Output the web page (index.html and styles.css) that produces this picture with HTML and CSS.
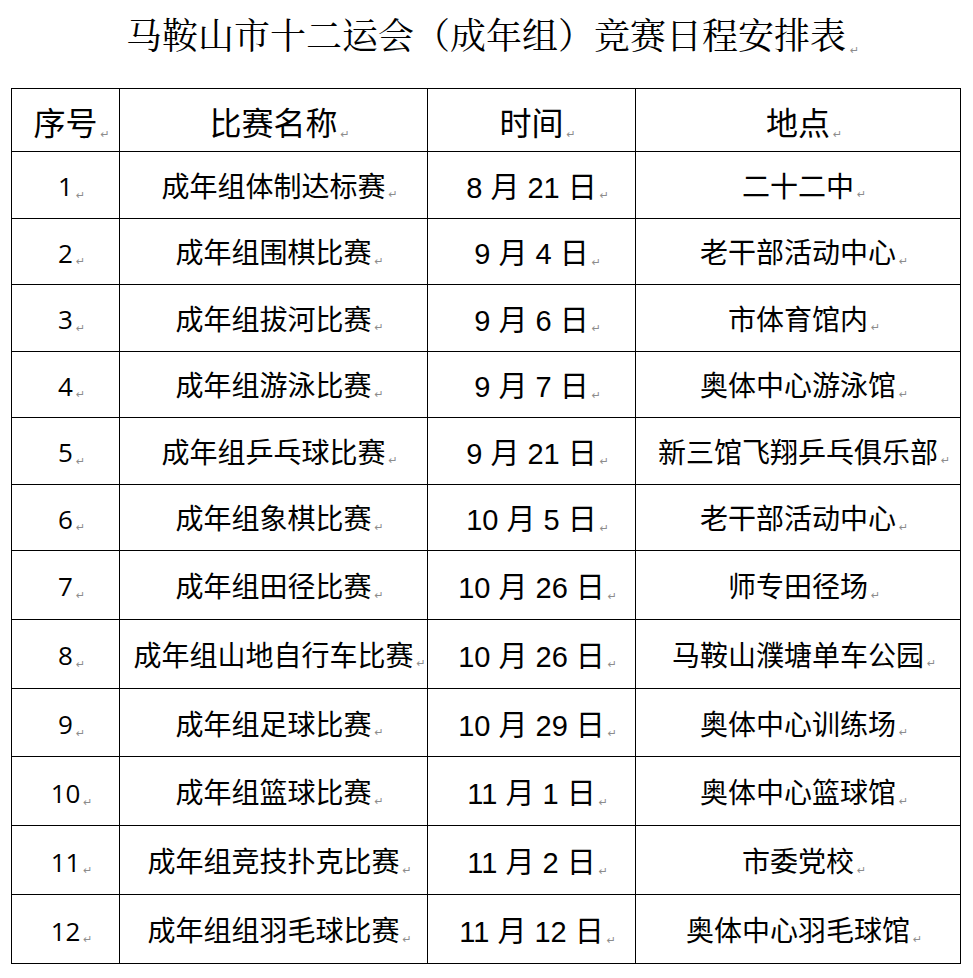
FILE: index.html
```html
<!DOCTYPE html>
<html lang="zh-CN">
<head>
<meta charset="utf-8">
<title>马鞍山市十二运会（成年组）竞赛日程安排表</title>
<link rel="stylesheet" href="styles.css">
</head>
<body>
<div class="page">
  <h1 class="title"><span class="t">马鞍山市十二运会（成年组）竞赛日程安排表</span></h1>
  <div class="grid">
    <div class="cell head"><span class="t">序号</span></div>
    <div class="cell head"><span class="t">比赛名称</span></div>
    <div class="cell head"><span class="t">时间</span></div>
    <div class="cell head"><span class="t">地点</span></div>

    <div class="cell num"><span class="t">1</span></div>
    <div class="cell"><span class="t">成年组体制达标赛</span></div>
    <div class="cell date"><span class="t">8 月 21 日</span></div>
    <div class="cell"><span class="t">二十二中</span></div>

    <div class="cell num"><span class="t">2</span></div>
    <div class="cell"><span class="t">成年组围棋比赛</span></div>
    <div class="cell date"><span class="t">9 月 4 日</span></div>
    <div class="cell"><span class="t">老干部活动中心</span></div>

    <div class="cell num"><span class="t">3</span></div>
    <div class="cell"><span class="t">成年组拔河比赛</span></div>
    <div class="cell date"><span class="t">9 月 6 日</span></div>
    <div class="cell"><span class="t">市体育馆内</span></div>

    <div class="cell num"><span class="t">4</span></div>
    <div class="cell"><span class="t">成年组游泳比赛</span></div>
    <div class="cell date"><span class="t">9 月 7 日</span></div>
    <div class="cell"><span class="t">奥体中心游泳馆</span></div>

    <div class="cell num"><span class="t">5</span></div>
    <div class="cell"><span class="t">成年组乒乓球比赛</span></div>
    <div class="cell date"><span class="t">9 月 21 日</span></div>
    <div class="cell"><span class="t">新三馆飞翔乒乓俱乐部</span></div>

    <div class="cell num"><span class="t">6</span></div>
    <div class="cell"><span class="t">成年组象棋比赛</span></div>
    <div class="cell date"><span class="t">10 月 5 日</span></div>
    <div class="cell"><span class="t">老干部活动中心</span></div>

    <div class="cell num"><span class="t">7</span></div>
    <div class="cell"><span class="t">成年组田径比赛</span></div>
    <div class="cell date"><span class="t">10 月 26 日</span></div>
    <div class="cell"><span class="t">师专田径场</span></div>

    <div class="cell num"><span class="t">8</span></div>
    <div class="cell"><span class="t">成年组山地自行车比赛</span></div>
    <div class="cell date"><span class="t">10 月 26 日</span></div>
    <div class="cell"><span class="t">马鞍山濮塘单车公园</span></div>

    <div class="cell num"><span class="t">9</span></div>
    <div class="cell"><span class="t">成年组足球比赛</span></div>
    <div class="cell date"><span class="t">10 月 29 日</span></div>
    <div class="cell"><span class="t">奥体中心训练场</span></div>

    <div class="cell num"><span class="t">10</span></div>
    <div class="cell"><span class="t">成年组篮球比赛</span></div>
    <div class="cell date"><span class="t">11 月 1 日</span></div>
    <div class="cell"><span class="t">奥体中心篮球馆</span></div>

    <div class="cell num"><span class="t">11</span></div>
    <div class="cell"><span class="t">成年组竞技扑克比赛</span></div>
    <div class="cell date"><span class="t">11 月 2 日</span></div>
    <div class="cell"><span class="t">市委党校</span></div>

    <div class="cell num"><span class="t">12</span></div>
    <div class="cell"><span class="t">成年组组羽毛球比赛</span></div>
    <div class="cell date"><span class="t">11 月 12 日</span></div>
    <div class="cell"><span class="t">奥体中心羽毛球馆</span></div>
  </div>
</div>
</body>
</html>
```

FILE: styles.css
```css
html, body {
  margin: 0;
  padding: 0;
  background: #ffffff;
}

.page {
  padding: 16px 0 0 11px;
  width: 950px;
  color: #000;
  font-family: "Noto Sans CJK SC", sans-serif;
}

.title {
  margin: 0 0 36px 0;
  height: 36px;
  line-height: 36px;
  font-size: 36px;
  font-weight: 400;
  text-align: center;
  font-family: "Noto Serif CJK SC", "Noto Sans CJK SC", serif;
  white-space: nowrap;
}

.grid {
  display: grid;
  grid-template-columns: 108px 308px 208px 325px;
  grid-template-rows: 63px repeat(6, 66.5px) repeat(6, 68.83px);
  border-top: 1px solid #000;
  border-left: 1px solid #000;
  width: 949px;
}

.cell {
  border-right: 1px solid #000;
  border-bottom: 1px solid #000;
  display: flex;
  align-items: center;
  justify-content: center;
  font-size: 28px;
  white-space: nowrap;
  font-family: "Noto Sans CJK SC", sans-serif;
}

.head {
  font-size: 32px;
  padding-top: 2px;
}

.num {
  font-family: "Open Sans", "Noto Sans CJK SC", sans-serif;
  font-size: 26px;
  padding-top: 3px;
}

.date {
  font-family: "Liberation Sans", "Noto Sans CJK SC", sans-serif;
  font-size: 29px;
}

.t {
  position: relative;
}

.t::after {
  content: "\21B5";
  position: absolute;
  left: 100%;
  bottom: 0.4em;
  margin-left: 3px;
  font-family: "DejaVu Sans", sans-serif;
  font-size: 11px;
  line-height: 1;
  color: #8c8c8c;
}

.num .t::after {
  bottom: 0.3em;
}

.title .t::after {
  bottom: 0.3em;
  margin-left: 4px;
}
```
